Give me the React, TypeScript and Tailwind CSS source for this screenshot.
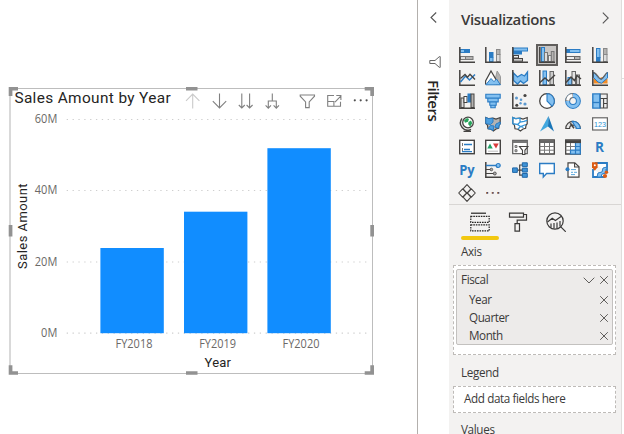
import type { ReactNode } from 'react';

const INK = '#454341';
const BLUE = '#2b7cc4';
const SKY = '#83c0f0';
const GREY = '#b5b3b1';

function Icon({ children }: { children: ReactNode }) {
  return (
    <svg viewBox="0 0 16 16" fill="none" className="block h-4 w-4 shrink-0 overflow-visible">
      {children}
    </svg>
  );
}

const axes = <path d="M.8 0v15.2H16" stroke={INK} strokeWidth="1.5" />;
const hBar = (x: number, y: number, w: number, h: number, fill: string, stroke: string) => (
  <rect x={x} y={y} width={w} height={h} fill={fill} stroke={stroke} />
);
const worldShape =
  'M.8 1.5l3 1.2L8 2.2l3 .8 4.2-1.5v6.2l-1.2 1.6-.4 2.9-2.6.8L8.4 15 6 13.2 3 12.8 2.4 9 .8 7.6z';

const visuals: { name: string; art: ReactNode }[] = [
  { name: 'stacked bar', art: <>{hBar(1.5, 2.5, 4, 3, SKY, BLUE)}{hBar(5.5, 2.5, 5, 3, BLUE, BLUE)}{hBar(1.5, 9.5, 5, 3, '#ddd', '#777')}{hBar(6.5, 9.5, 7.5, 3, GREY, '#777')}{axes}</> },
  { name: 'stacked column', art: <>{hBar(4.5, 5.5, 3.5, 4.5, BLUE, BLUE)}{hBar(4.5, 10.5, 3.5, 4, SKY, BLUE)}{hBar(11.5, 2.5, 3.5, 5, GREY, '#888')}{hBar(11.5, 7.5, 3.5, 7, '#ddd', '#888')}{axes}</> },
  { name: 'clustered bar', art: <>{hBar(1.5, 1, 14, 3, SKY, BLUE)}{hBar(1.5, 4.5, 8, 2.5, BLUE, BLUE)}{hBar(1.5, 8.5, 5, 2.5, '#eee', INK)}{hBar(1.5, 11.5, 9, 2.7, '#ccc', INK)}{axes}</> },
  { name: 'clustered column', art: <>{hBar(2.5, .5, 3, 14, SKY, BLUE)}{hBar(5.5, 5.5, 3, 9, '#ddd', '#777')}{hBar(9.5, 8.5, 2.8, 6, '#eee', '#777')}{hBar(12.3, 4.5, 2.7, 10, GREY, '#777')}{axes}</> },
  { name: 'full stacked bar', art: <>{hBar(1.5, 2.5, 3, 3, BLUE, BLUE)}{hBar(4.5, 2.5, 10.5, 3, SKY, BLUE)}{hBar(1.5, 9.5, 8, 3, '#eee', '#666')}{hBar(9.5, 9.5, 5.5, 3, GREY, '#666')}{axes}</> },
  { name: 'full stacked column', art: <>{hBar(4.5, 1.5, 3.5, 9, SKY, BLUE)}{hBar(4.5, 10.5, 3.5, 4, BLUE, BLUE)}{hBar(11.5, 1.5, 3.5, 6, GREY, '#888')}{hBar(11.5, 7.5, 3.5, 7, '#ddd', '#888')}{axes}</> },

  { name: 'line', art: <>{axes}<path d="M1.5 12l5-6 4 4L16 4.5" stroke={BLUE} strokeWidth="1.5" /><path d="M1.5 8.5l4.5-4 2.5 2.7L11 4.3 16 9.5" stroke={INK} strokeWidth="1.3" /></> },
  { name: 'area', art: <><path d="M9 14L12.2 1 15.5 6.5v8H9z" fill={GREY} stroke="#999" /><path d="M.6 14.5V11L6 1l5.5 9.5v4" fill="#fff" stroke={INK} strokeWidth="1.2" /><path d="M.8 14.8L6 8.5l3 3.2L11.5 9l3.9 5.8z" fill={SKY} stroke={BLUE} /></> },
  { name: 'stacked area', art: <><path d="M1.5 3l4 4 4-2.5 3 1.5 3-4v8.5l-4 3-3-2.5-3 3-4-3.5z" fill={SKY} stroke={BLUE} strokeWidth="1.3" />{axes}</> },
  { name: 'line stacked', art: <>{hBar(4, 1, 3.5, 13.5, SKY, BLUE)}{hBar(11, 1.5, 3.5, 13, '#ccc', '#666')}<path d="M1 12.5l5-4.5 3.5 3L16 5" stroke={INK} strokeWidth="1.4" />{axes}</> },
  { name: 'line clustered', art: <>{hBar(3, 7.5, 3.5, 7, SKY, BLUE)}{hBar(7, 1.5, 3.5, 13, '#e4e4e4', '#666')}{hBar(11.5, 5, 3, 9.5, '#ccc', '#666')}<path d="M1 12.5l5-5.5 3.5 3.5 2.5-5L16 9" stroke={INK} strokeWidth="1.4" />{axes}</> },
  { name: 'ribbon', art: <><path d="M1.5 9H6l4-2 5.5 1.5v5h-14z" fill="#f28c28" /><path d="M1.5 2l5 6 3 1.5 6-7.5v6l-6 5.2L6 12 1.5 7.5z" fill={SKY} stroke={BLUE} /><path d="M1.5 2.5C5.5 3 6 9 9 9s3.5-5.5 6.5-6.5" stroke="#666" strokeWidth="1.3" />{axes}</> },

  { name: 'waterfall', art: <>{hBar(2, 5, 3, 9.5, '#ddd', INK)}{hBar(5, 3.5, 3, 6, '#fff', INK)}{hBar(9, 1, 2.6, 8, BLUE, BLUE)}{hBar(12, 1, 3, 13.5, GREY, INK)}{axes}</> },
  { name: 'funnel', art: <path d="M.8 1.3h14.4v3.8H.8zM2.8 5.1h10.4v3.8H2.8zM4.8 8.9h6.4v3.3H4.8zM5.8 12.2h4.4v2.6H5.8z" fill={SKY} stroke={BLUE} strokeWidth="1.1" /> },
  { name: 'scatter', art: <>{axes}<g fill={INK}><circle cx="13" cy="2.5" r="1.6" /><circle cx="4.8" cy="12.2" r="1.5" /></g><g fill={BLUE} opacity=".75"><circle cx="4.5" cy="5" r="1.5" /><circle cx="9" cy="6.8" r="1.3" /><circle cx="8.5" cy="10.2" r="1.2" /><circle cx="13" cy="11" r="1.6" /></g></> },
  { name: 'pie', art: <><circle cx="8" cy="8" r="7.3" fill="#fff" stroke={INK} strokeWidth="1.3" /><path d="M8 .8V8l5.1 5.1A7.2 7.2 0 008 .8z" fill={SKY} stroke={BLUE} strokeWidth="1.1" /></> },
  { name: 'donut', art: <><circle cx="8" cy="8" r="5.4" stroke={BLUE} strokeWidth="5" /><circle cx="8" cy="8" r="5.4" stroke={SKY} strokeWidth="3" /><path d="M8 2.6A5.4 5.4 0 002.6 8" stroke="#777" strokeWidth="5" /><path d="M7.5 2.6A5.4 5.4 0 002.7 7.5" stroke="#fff" strokeWidth="3" /></> },
  { name: 'treemap', art: <><path d="M8.2 1h7v14h-7zM8.2 5.5h7M11.6 5.5V15M11.6 10.5h3.6" stroke={INK} fill="#eee" strokeWidth="1.1" /><path d="M.8.9h7v14.2h-7z" fill={SKY} stroke={BLUE} strokeWidth="1.4" /><path d="M.7 9.5h7" stroke={BLUE} strokeWidth="1.3" /></> },

  { name: 'map', art: <><circle cx="9" cy="6.5" r="5.3" fill="#fff" stroke={INK} strokeWidth="1.3" /><path d="M5 4.5l3-2.5 2 1-1 2.7-3 1zM9.5 6l2.5-1.5 1.2 2.8-2 3.2-2-2.3z" fill="#26a35a" /><path d="M3 2.5A7.2 7.2 0 0012 13.3M8 13.5v1.6M4.5 15.4h7.5" stroke={INK} strokeWidth="1.4" /></> },
  { name: 'filled map', art: <><path d={worldShape} fill={GREY} stroke={INK} strokeWidth="1.2" /><path d="M.8 1.5l3 1.2L8 2.2v4L5.5 8.5.8 7.6zM11 8l4.2-2v2l-1.2 1.6-.4 2.6-3.6-.9zM5.5 9.5l3.5.5-1 4.5-2-1.3-3-.4z" fill="#4da0e0" stroke={BLUE} /></> },
  { name: 'shape map', art: <><path d={worldShape} fill="#fff" stroke={INK} strokeWidth="1.2" /><path d="M.8 1.5l3 1.2L8 2.2v4L5.5 8.5.8 7.6zM8 6.2l4-.8 3.2-1M5.5 8.5l3 2 5.5-2M6 13l2.5-2.5 3 1" stroke="#3495d8" strokeWidth="1.3" /></> },
  { name: 'azure map', art: <><path d="M9.5 0L1 15.5 9 10.5z" fill="#42a8df" /><path d="M9.5 0L15 15.5l-6-5z" fill="#1976b8" /></> },
  { name: 'gauge', art: <><path d="M.8 12.5a7.2 7.2 0 0114.4 0h-3.8a3.4 3.4 0 00-6.8 0z" fill="#e6e6e6" stroke={INK} strokeWidth="1.2" /><path d="M7.2 5.3a7.2 7.2 0 018 7.2h-3.8a3.4 3.4 0 00-1.6-2.8z" fill={SKY} stroke={BLUE} strokeWidth="1.2" /><path d="M5.3 7.2l3.7 5" stroke={INK} strokeWidth="1.6" /></> },
  { name: 'card', art: <><rect x=".6" y="1.8" width="14.8" height="12.2" fill="#fff" stroke="#666" strokeWidth="1.2" /><text x="8" y="11" textAnchor="middle" fontFamily="Liberation Sans, sans-serif" fontSize="8" textLength="12" lengthAdjust="spacingAndGlyphs" fill="#298fd2">123</text></> },

  { name: 'multi-row card', art: <><rect x=".7" y="1.3" width="14.6" height="13.4" fill="#fff" stroke={INK} strokeWidth="1.4" /><path d="M3.5 4v3M3.5 9v3" stroke="#777" /><path d="M5 5.5h8M5 10.5h6M3 12.7h10" stroke={BLUE} strokeWidth="1.3" /></> },
  { name: 'kpi', art: <><rect x=".7" y="1.3" width="14.6" height="13.4" fill="#fff" stroke={INK} strokeWidth="1.4" /><path d="M2.3 9.5L5 4.5l2.7 5z" fill="#24a267" /><path d="M8 4.5h5.7L11 9.5z" fill="#d83b3b" /><path d="M3 12.2h10" stroke="#bbb" /></> },
  { name: 'slicer', art: <><path d="M.7 1.3h14.6v13.4H.7z" fill="#fff" stroke="#666" strokeWidth="1.3" /><path d="M.7 3h14.6" stroke="#777" strokeWidth="2" /><path d="M3 6.5h2v2H3zM3 10.7h2v2H3z" stroke="#777" fill="#bbb" /><path d="M7.5 7.5h8.4l-3 3.8v4.2h-2.4v-4.2z" fill="#fff" stroke={INK} strokeWidth="1.1" /></> },
  { name: 'table', art: <><path d="M.7 1h14.6v14H.7z" fill="#fff" stroke={INK} strokeWidth="1.3" /><path d="M.7 2.7h14.6" stroke="#666" strokeWidth="2.6" /><path d="M.7 7.5h14.6M.7 11.2h14.6M5.5 4v11M10.5 4v11" stroke="#777" /></> },
  { name: 'matrix', art: <><path d="M.7 1h14.6v14H.7z" fill="#fff" stroke={INK} strokeWidth="1.3" /><path d="M10.5 4h5v11h-10v-4h5z" fill={SKY} /><path d="M.7 7.5h10M.7 11.2h5M5.5 4v7" stroke="#777" /><path d="M10.5 4v11M10.5 7.5h5M5.5 11.2h10M5.5 11.2V15h9.8V4" stroke={BLUE} strokeWidth="1.2" /><path d="M.2 2.7h15.6" stroke={INK} strokeWidth="2.8" /></> },
  { name: 'r', art: <text x="3" y="13.3" fontFamily="Open Sans, sans-serif" fontWeight="700" fontSize="14.5" textLength="9" lengthAdjust="spacingAndGlyphs" fill={BLUE}>R</text> },

  { name: 'python', art: <text x=".2" y="12.6" fontFamily="Open Sans, sans-serif" fontWeight="700" fontSize="14.5" textLength="15.5" lengthAdjust="spacingAndGlyphs" fill={BLUE}>Py</text> },
  { name: 'key influencers', art: <>{axes}<path d="M1 3.5h10" stroke={BLUE} strokeWidth="1.5" /><circle cx="13.2" cy="3.5" r="2" fill={SKY} stroke={BLUE} strokeWidth="1.2" /><path d="M1 7.5h5M1 11.5h8" stroke={INK} /><circle cx="6.4" cy="7.5" r="1.3" fill="#aaa" stroke={INK} strokeWidth=".8" /><circle cx="9.8" cy="11.5" r="1.5" fill="#aaa" stroke={INK} strokeWidth=".8" /></> },
  { name: 'decomposition tree', art: <><path d="M4 8.2h7M7.7 8.2V3H11M7.7 8.2v5H11" stroke={INK} strokeWidth="1.2" /><path d="M.6 5.9h4.7v4.5H.6zM10.3.8h5v3.8h-5zM10.3 6.1h5v4h-5zM10.3 11.5h5v3.8h-5z" fill="#3f93d6" stroke="#1f67a8" /></> },
  { name: 'q&a', art: <path d="M.7 1.5h14.6v10H7.6l-3.3 3.4v-3.4H.7z" fill="#fff" stroke={BLUE} strokeWidth="1.4" /> },
  { name: 'narrative', art: <><path d="M3 .8h6.8L14 4.8v10.4H3z" fill="#fff" stroke={INK} strokeWidth="1.2" /><path d="M9.6 1v4H14" stroke={INK} strokeWidth="1.1" /><path d="M6 7.6h5M6 10.3h2M9 10.3h3M6 12.6h4" stroke="#5aa8dc" /><circle cx="2.5" cy="7.2" r="2" fill={BLUE} /></> },
  { name: 'arcgis', art: <><path d="M3 1h12v10M13 15H1V7" stroke={BLUE} strokeWidth="1.8" fill="#fff" /><path d="M15 1.5V5l-4 1-1 4-4 1-1 4h4l1-3 4-1V7" fill={SKY} stroke={BLUE} /><path d="M0 .3h5.6v5L2.8 8.8 0 5.3z" fill="#dc5b13" /><circle cx="2.8" cy="3.2" r="1" fill="#fff" /><circle cx="14.4" cy="10.2" r="1.8" fill="#dc5b13" /><circle cx="13" cy="14" r="2.1" fill="#dc5b13" /></> },

  { name: 'power apps', art: <path d="M8-.4l3.9 4.2L8 8 4.1 3.8zM3.6 3.8L7.5 8l-3.9 4.2L-.3 8zM12.4 3.8L16.3 8l-3.9 4.2L8.5 8zM8 8l3.9 4.2L8 16.4l-3.9-4.2z" stroke={INK} strokeWidth="1.1" strokeLinejoin="round" /> },
  { name: 'more', art: <g><path d="M1.5 7h1.7v1.7H1.5zM7 7h1.7v1.7H7zM12.6 7h1.7v1.7h-1.7z" fill="#4a4768" /><path d="M1.2 7H2v1.7h-.8zM6.7 7h.8v1.7h-.8zM12.3 7h.8v1.7h-.8z" fill="#b26b35" /></g> },
];

const years = [
  { label: 'FY2018', x: 100.4, top: 248 },
  { label: 'FY2019', x: 184, top: 211.7 },
  { label: 'FY2020', x: 267.4, top: 148.2 },
];
const ticks = [
  { label: '60M', y: 119.5, w: 22.5 },
  { label: '40M', y: 190.5, w: 22.5 },
  { label: '20M', y: 262, w: 22.5 },
  { label: '0M', y: 333.2, w: 16.2 },
];

function ChartVisual() {
  return (
    <svg viewBox="0 0 417 434" className="block h-[434px] w-[417px] shrink-0 bg-white" fill="none">
      <path d="M10 88.5h363M10 373.5h363" stroke="#bdbdbd" />
      <path d="M372.5 88v286" stroke="#bdbdbd" />
      <path d="M10 88v286" stroke="#d9d9d9" strokeWidth="2" />
      <path
        d="M8.7 87h9.3v3.4h-5.6V96H8.7zM374 87h-9.3v3.4h5.6V96h3.7zM8.7 374.7H18v-3.4h-5.6v-6H8.7zM374 374.7h-9.3v-3.4h5.6v-6h3.7zM186 87h11.5v3.4H186zM186 371.3h11.5v3.4H186zM8.7 225h3.7v11.5H8.7zM370.3 225h3.7v11.5h-3.7z"
        fill="#929292"
      />
      <text x="14.4" y="103.2" fontFamily="Roboto, sans-serif" fontSize="15.4" textLength="156.3" fill="#252423">
        Sales Amount by Year
      </text>

      <g stroke="#808080" strokeWidth="1.1">
        <path d="M192.7 108.5V94M186 100.8l6.7-6.7 6.7 6.7" stroke="#cacaca" />
        <path d="M219.5 93.5V108M212.8 101.2l6.7 6.7 6.7-6.7" />
        <path d="M241.8 93.5V108M238.8 105l3 3 3-3M249.6 93.5V108M246.6 105l3 3 3-3" />
        <path d="M272.3 93.5V101M268.3 108v-7h8v7M265.6 105.4l2.7 2.7 2.7-2.7M273.6 105.4l2.7 2.7 2.7-2.7" />
        <path d="M300.2 95h14.3v1.2l-5.3 5.8v5.6h-3.6V102l-5.4-5.8z" />
        <path d="M334 95.5h-6.3v10.8H340.5v-4.6M327.7 101.5h6.2v4.8M335 102.2l5.7-6M336.3 95.5h4.6v4.6" />
      </g>
      <g fill="#505050">
        <circle cx="354.8" cy="100.3" r="1.1" />
        <circle cx="360.7" cy="100.3" r="1.1" />
        <circle cx="366.6" cy="100.3" r="1.1" />
      </g>

      {ticks.map((t) => (
        <g key={t.label}>
          <path d={`M66.7 ${t.y}H366.5`} stroke="#cecece" strokeWidth="1.2" strokeDasharray="1.3 4.55" />
          <text x={57.3 - t.w} y={t.y + 3.7} fontFamily="Open Sans, sans-serif" fontSize="11.9" textLength={t.w} lengthAdjust="spacingAndGlyphs" fill="#6b6967">
            {t.label}
          </text>
        </g>
      ))}
      {years.map((b) => (
        <g key={b.label}>
          <rect x={b.x} y={b.top} width="63.4" height={333.2 - b.top} fill="#118dff" />
          <text x={b.x + 15.2} y="348.3" fontFamily="Open Sans, sans-serif" fontSize="11.9" textLength="36.8" lengthAdjust="spacingAndGlyphs" fill="#6b6967">
            {b.label}
          </text>
        </g>
      ))}
      <text x="204.6" y="366.5" fontFamily="Roboto, sans-serif" fontSize="13" textLength="26.2" fill="#252423">
        Year
      </text>
      <text transform="translate(26.7 268.9) rotate(-90)" fontFamily="Roboto, sans-serif" fontSize="13" textLength="85.5" fill="#252423">
        Sales Amount
      </text>
    </svg>
  );
}

function Remove() {
  return (
    <svg viewBox="0 0 8 8" className="block h-2 w-2" stroke="#605e5c" strokeWidth="1">
      <path d="M.2.2l7.6 7.6M7.8.2L.2 7.8" />
    </svg>
  );
}

function FieldWells() {
  return (
    <div className="pl-1 text-[11.7px] text-[#3b3a39]">
      <div className="flex h-[25px] items-center pl-2 tracking-[-0.35px]">Axis</div>
      <div className="h-[90px] w-[163px] border border-dashed border-[#bebbb8] bg-white p-[3px] pl-[2px]">
        <div className="h-[76px] w-[157px] rounded-[2px] border border-[#c3c1bf] bg-[#edebea] pl-[4px] pr-1">
          <div className="flex h-[21px] items-center">
            <span className="grow tracking-[-0.4px]">Fiscal</span>
            <svg viewBox="0 0 12 7" className="mr-[5px] h-[7px] w-3" fill="none" stroke="#605e5c">
              <path d="M.7.7L6 6 11.3.7" />
            </svg>
            <Remove />
          </div>
          {['Year', 'Quarter', 'Month'].map((field) => (
            <div key={field} className="flex h-[18px] items-center justify-between pl-2 tracking-[-0.45px]">
              {field}
              <Remove />
            </div>
          ))}
        </div>
      </div>
      <div className="flex h-[31px] items-center pl-2 pt-[6px] tracking-[-0.35px]">Legend</div>
      <div className="flex h-[27px] w-[163px] items-center border border-dashed border-[#bebbb8] bg-white pl-[10px] tracking-[-0.4px]">
        Add data fields here
      </div>
      <div className="flex h-[35px] items-center pl-2 leading-none tracking-[-0.35px]">Values</div>
    </div>
  );
}

export default function App() {
  return (
    <div className="flex h-[434px] w-[624px] overflow-hidden bg-white font-['Open_Sans',sans-serif]">
      <ChartVisual />

      <aside className="flex w-8 shrink-0 flex-col items-center border-l border-[#b3b0ad] bg-white pt-3">
        <svg viewBox="0 0 7 11" className="mr-px h-[11px] w-[7px]" fill="none" stroke="#555" strokeWidth="1.1">
          <path d="M6.2.5L1 5.5l5.2 5" />
        </svg>
        <svg viewBox="0 0 12 12" className="ml-[3px] mt-[33px] h-3 w-3" fill="none" stroke="#666">
          <path d="M11.2.6v10.8h-.8L6 7.5H.8v-3H6L10.400.6z" />
        </svg>
        <span className="mt-[12px] text-[15px] font-semibold leading-none tracking-[-0.5px] text-[#252423] [writing-mode:vertical-rl]">Filters</span>
      </aside>

      <aside className="h-[434px] w-[173px] shrink-0 overflow-hidden border-r border-[#dfdddb] bg-[#f3f2f1]">
        <header className="flex h-11 items-center pb-[5px] pl-3 pr-[12px]">
          <h1 className="grow text-[15px] font-semibold tracking-[-0.38px] text-[#3b3a39]">Visualizations</h1>
          <svg viewBox="0 0 7 12" className="mb-1 h-3 w-[7px]" fill="none" stroke="#555" strokeWidth="1.1">
            <path d="M.8.6L6.2 6 .8 11.4" />
          </svg>
        </header>
        <div className="ml-[4.4px] grid h-[160px] w-[160px] grid-cols-6 grid-rows-7">
          {visuals.map((v, i) => (
            <div key={v.name} className="flex items-center justify-center">
              <div className={i === 3 ? 'border-2 border-[#605e5c] bg-[#c8c6c4] p-px' : 'p-[3px]'}>
                <Icon>{v.art}</Icon>
              </div>
            </div>
          ))}
        </div>
        <div className="flex h-8 items-center border-t border-[#d8d6d4] pl-[21px] pt-[3px]">
          <svg viewBox="0 0 20 20" className="h-5 w-5" fill="none" stroke="#252423" strokeWidth="1.2">
            <path d="M1 1.2h15" />
            <path d="M.8 4.3h18.4v6H.8zM.8 12.8h18.4v6H.8z" strokeDasharray="1.6 .9" />
          </svg>
          <svg viewBox="0 0 20 20" className="ml-[18px] h-5 w-5" fill="none" stroke="#3b3a39" strokeWidth="1.2">
            <path d="M1.5 1.2h14v4h-14zM15.5 2.5h3v5.7H9.2v3.5M7 11.7h4.5v7.5H7z" />
          </svg>
          <svg viewBox="0 0 20 20" className="ml-[18px] h-5 w-5" fill="none" stroke="#3b3a39" strokeWidth="1.2">
            <circle cx="9" cy="9" r="8.2" />
            <path d="M14.8 14.8l5 5" />
            <path d="M1.5 10l4.7-3.8 3.2 2.3 6-4.2M5 15.5v-4M8 16.5V11M11 16.5v-6M14 14.5V9" />
          </svg>
        </div>
        <div className="ml-3 h-[3.5px] w-[38px] rounded-full bg-[#f2c811]" />
        <FieldWells />
      </aside>
      <div className="w-0.5 bg-white pt-[78px]">
        <div className="h-px w-full bg-[#dedede]" />
      </div>
    </div>
  );
}
